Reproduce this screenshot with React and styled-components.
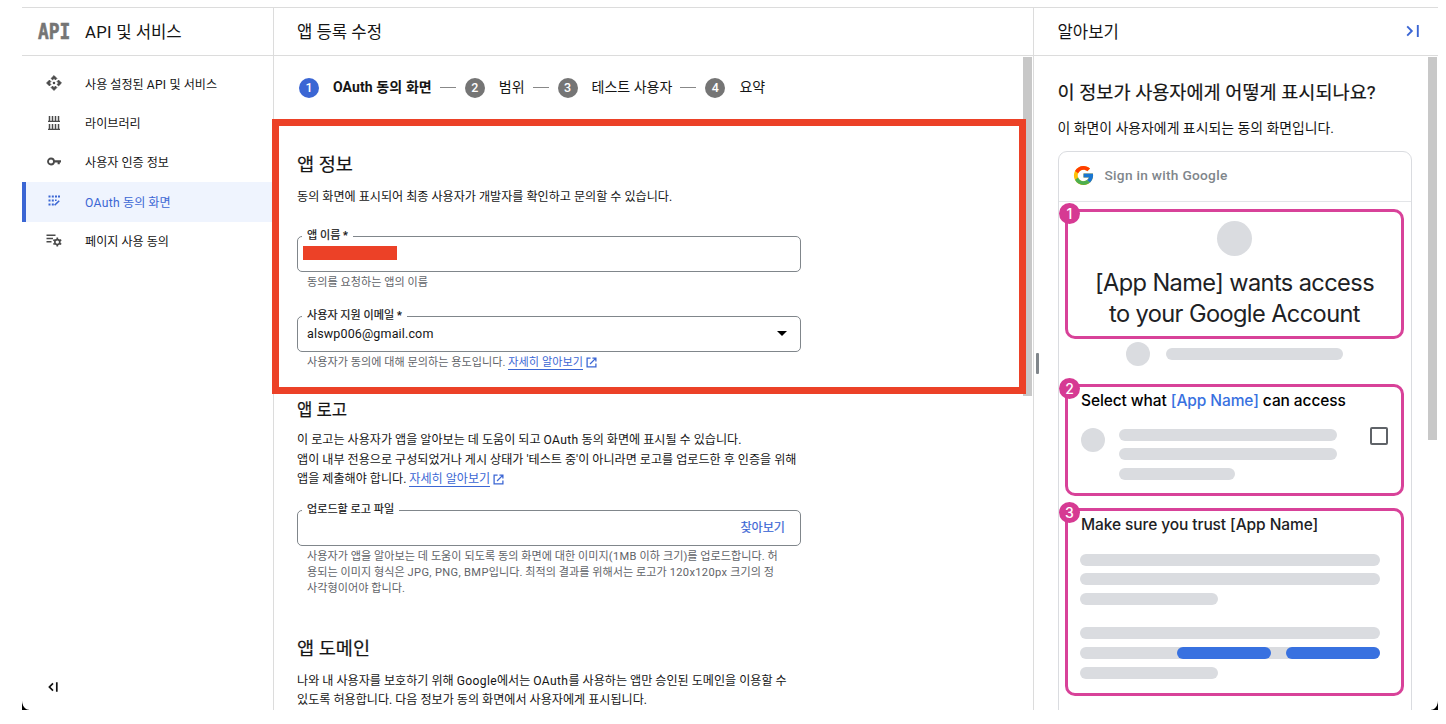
import React from "react";
import styled, { createGlobalStyle } from "styled-components";
import { FcGoogle } from "react-icons/fc";

const menu = [
  {
    label: (
      <>
        사용 설정된 <En>API</En> 및 서비스
      </>
    ),
    icon: <ApiIcon />,
  },
  { label: "라이브러리", icon: <LibraryIcon /> },
  { label: "사용자 인증 정보", icon: <KeyIcon /> },
  {
    label: (
      <>
        <En>OAuth</En> 동의 화면
      </>
    ),
    icon: <ConsentIcon />,
    active: true,
  },
  { label: "페이지 사용 동의", icon: <ListGearIcon /> },
];

const steps = ["OAuth 동의 화면", "범위", "테스트 사용자", "요약"];

function En({ children }) {
  return <Latin lang="en">{children}</Latin>;
}

function ApiIcon() {
  return (
    <svg width="18" height="18" viewBox="0 0 24 24" fill="currentColor">
      <path
        d="M15.9 5.9L13.9 7.9 12 6 10.1 7.9 8.1 5.9 12 2zM18.1 15.9L16.1 13.9 18 12 16.1 10.1 18.1 8.1 22 12zM8.1 18.1L10.1 16.1 12 18 13.9 16.1 15.9 18.1 12 22zM5.9 8.1L7.9 10.1 6 12 7.9 13.9 5.9 15.9 2 12z"
        stroke="currentColor"
        strokeWidth="0.9"
        strokeLinejoin="round"
      />
      <circle cx="12" cy="12" r="1.7" />
    </svg>
  );
}

function LibraryIcon() {
  return (
    <svg width="12" height="14" viewBox="0 0 12 14" fill="none" stroke="currentColor">
      <path d="M0 5.4h12M0 13.3h12" strokeWidth="1.2" />
      <path d="M1.5 0v5M4.5 0v5M7.5 0v5M10.5 0v5M1.5 8v5M4.5 8v5M7.5 8v5M10.5 8v5" strokeWidth="1.5" />
    </svg>
  );
}

function KeyIcon() {
  return (
    <svg width="14" height="9" viewBox="0 0 14 9" fill="none" stroke="currentColor">
      <circle cx="4" cy="4.5" r="3" strokeWidth="1.8" />
      <path d="M6.8 4.3H14M11.7 4.3v3" strokeWidth="2.2" />
    </svg>
  );
}

function ConsentIcon() {
  return (
    <svg width="12" height="12" viewBox="0 0 12 12" fill="currentColor">
      <path d="M.5.5h2v2h-2zM3.8.5h2v2h-2zM7 .5h2v2H7zM10 .5h2v2h-2zM.5 4.5h2v2h-2zM3.8 4.5h2v2h-2zM7 4.5h1.6v1.6H7zM.5 8.6h2v2h-2zM3.8 8.6h2v2h-2z" />
      <path d="M6.6 10.3l4.6-4.6" fill="none" stroke="currentColor" strokeWidth="1.6" />
    </svg>
  );
}

function ListGearIcon() {
  return (
    <svg width="16" height="13" viewBox="0 0 16 13" fill="none" stroke="currentColor">
      <path d="M.5 1.3h9M.5 4.5h6.5M.5 7.7h5" strokeWidth="1.5" />
      <circle cx="11.3" cy="8.1" r="2.5" strokeWidth="1.6" />
      <path
        d="M11.3 3.6v1.6M11.3 11v1.6M7.4 5.8l1.4.9M13.8 9.5l1.4.9M7.4 10.4l1.4-.9M13.8 6.7l1.4-.9"
        strokeWidth="1.7"
      />
    </svg>
  );
}

function External() {
  return (
    <ExternalSvg viewBox="0 0 12 12" fill="none" stroke="currentColor" strokeWidth="1.4">
      <path d="M5 1.2H1.2v9.6h9.6V7M7 1.2h3.8V5M10.8 1.2L4.4 7.6" />
    </ExternalSvg>
  );
}

const App = () => {
  return (
    <>
      <GlobalStyle />
      <Window>
        <Sidebar>
          <Header>
            <ApiLogo>API</ApiLogo>
            <span>
              <En>API</En> 및 서비스
            </span>
          </Header>
          <Menu>
            {menu.map((item, i) => (
              <MenuItem key={i} $active={item.active}>
                <MenuIcon $active={item.active}>{item.icon}</MenuIcon>
                <span>{item.label}</span>
              </MenuItem>
            ))}
          </Menu>
          <Collapse>
            <svg width="12" height="12" viewBox="0 0 12 12" fill="none" stroke="#111" strokeWidth="1.7">
              <path d="M6 2.4L2.4 6 6 9.6M9.8 1.2v9.6" />
            </svg>
          </Collapse>
        </Sidebar>

        <Main>
          <Header $left={23}>앱 등록 수정</Header>
          <Scroller>
            <Stepper>
              {steps.map((step, i) => (
                <Step key={step} $active={i === 0}>
                  <StepNumber $active={i === 0}>{i + 1}</StepNumber>
                  {step}
                </Step>
              ))}
            </Stepper>

            <Highlight>
              <Title>앱 정보</Title>
              <Text>동의 화면에 표시되어 최종 사용자가 개발자를 확인하고 문의할 수 있습니다.</Text>
              <Field>
                <Label>앱 이름 *</Label>
                <Redacted />
              </Field>
              <Hint>동의를 요청하는 앱의 이름</Hint>
              <Field $second>
                <Label>사용자 지원 이메일 *</Label>
                <Value>alswp006@gmail.com</Value>
                <Arrow />
              </Field>
              <Hint>
                사용자가 동의에 대해 문의하는 용도입니다. <Link href="#">자세히 알아보기</Link>
                <External />
              </Hint>
            </Highlight>

            <Section>
              <Title $small>앱 로고</Title>
              <Text>
                이 로고는 사용자가 앱을 알아보는 데 도움이 되고 <En>OAuth</En> 동의 화면에 표시될 수 있습니다.
                <br />
                앱이 내부 전용으로 구성되었거나 게시 상태가 '테스트 중'이 아니라면 로고를 업로드한 후 인증을 위해
                <br />
                앱을 제출해야 합니다. <Link href="#">자세히 알아보기</Link>
                <External />
              </Text>
              <Field $upload>
                <Label>업로드할 로고 파일</Label>
                <Browse>찾아보기</Browse>
              </Field>
              <Hint>
                사용자가 앱을 알아보는 데 도움이 되도록 동의 화면에 대한 이미지<En>(1MB</En> 이하 크기)를 업로드합니다. 허
                <br />
                용되는 이미지 형식은 <En>JPG, PNG, BMP</En>입니다. 최적의 결과를 위해서는 로고가 <En>120x120px</En> 크기의 정
                <br />
                사각형이어야 합니다.
              </Hint>
              <Title $domain>앱 도메인</Title>
              <Text>
                나와 내 사용자를 보호하기 위해 <En>Google</En>에서는 <En>OAuth</En>를 사용하는 앱만 승인된 도메인을 이용할 수
                <br />
                있도록 허용합니다. 다음 정보가 동의 화면에서 사용자에게 표시됩니다.
              </Text>
            </Section>
            <Scrollbar $height={339} />
          </Scroller>
        </Main>

        <Learn>
          <Header $left={23.5}>
            알아보기
            <ExpandIcon width="14" height="14" viewBox="0 0 14 14" fill="none" stroke="#3b66d4" strokeWidth="1.9">
              <path d="M1.2 2.4L5.8 7l-4.6 4.6M11.8 1v12" />
            </ExpandIcon>
          </Header>
          <LearnBody>
            <Handle />
            <Question>이 정보가 사용자에게 어떻게 표시되나요?</Question>
            <Answer>이 화면이 사용자에게 표시되는 동의 화면입니다.</Answer>
            <Card>
              <CardHeader>
                <FcGoogle size={23} />
                <span>Sign in with Google</span>
              </CardHeader>
              <Box $height={130} $top={7}>
                <Badge>1</Badge>
                <BigDot />
                <Wants>
                  [App Name] wants access
                  <br />
                  to your Google Account
                </Wants>
              </Box>
              <Account>
                <Dot />
                <Bar $width={177} />
              </Account>
              <Box $height={112} $top={18}>
                <Badge>2</Badge>
                <BoxTitle $dark>
                  Select what <b>[App Name]</b> can access
                </BoxTitle>
                <Scopes>
                  <Dot />
                  <Bars>
                    <Bar $width={218} />
                    <Bar $width={218} />
                    <Bar $width={116} />
                  </Bars>
                  <Checkbox />
                </Scopes>
              </Box>
              <Box $height={188} $top={12}>
                <Badge>3</Badge>
                <BoxTitle>Make sure you trust [App Name]</BoxTitle>
                <Paragraph $top={19}>
                  <Bar $width={300} />
                  <Bar $width={300} />
                  <Bar $width={138} />
                </Paragraph>
                <Paragraph $top={22.5}>
                  <Bar $width={300} />
                  <Bar $width={300}>
                    <BlueBar />
                    <BlueBar />
                  </Bar>
                  <Bar $width={138} />
                </Paragraph>
              </Box>
            </Card>
            <Scrollbar $height={383} />
          </LearnBody>
        </Learn>
        <Corner />
        <Corner $right />
      </Window>
    </>
  );
};

const GlobalStyle = createGlobalStyle`
  * {
    box-sizing: border-box;
  }

  body {
    margin: 0;
    background: #fff;
    color: #151515;
    font-family: Roboto, "Noto Sans CJK KR", sans-serif;
    font-size: 12.1px;
  }
`;

const Latin = styled.span`
  letter-spacing: 0.35px;
`;

const Window = styled.div`
  position: relative;
  width: 1416px;
  height: 703px;
  margin: 7px 0 0 22px;
  border-top: 1px solid #dcdcdc;
  display: grid;
  grid-template-columns: 252px 760px 404px;
  overflow: hidden;
`;

const Header = styled.header`
  height: 48px;
  flex: none;
  display: flex;
  align-items: center;
  padding: 0 0 2px ${(p) => p.$left || 0}px;
  border-bottom: 1px solid #dcdcdc;
  font-size: 16.7px;
`;

const Sidebar = styled.nav`
  display: flex;
  flex-direction: column;
  border-right: 1px solid #dcdcdc;
`;

const ApiLogo = styled.span`
  width: 39px;
  margin: 2px 8px 0 16px;
  color: #757575;
  font: bold 21.5px/30px "DejaVu Sans Mono", monospace;
  -webkit-text-stroke: 0.6px #757575;
  transform: scaleX(0.83);
  transform-origin: left;
`;

const Menu = styled.ul`
  list-style: none;
  margin: 8px 0 0;
  padding: 0;
`;

const MenuItem = styled.li`
  height: 39.4px;
  padding-bottom: 1px;
  display: flex;
  align-items: center;
  color: ${(p) => (p.$active ? "#3b66d4" : "#151515")};
  background: ${(p) => (p.$active ? "#eff4fe" : "none")};
  box-shadow: ${(p) => (p.$active ? "inset 4px 0 #3b66d4" : "none")};
`;

const MenuIcon = styled.span`
  width: 63px;
  height: 18px;
  display: flex;
  align-items: center;
  justify-content: center;
  color: ${(p) => (p.$active ? "#3b66d4" : "#4a4a4a")};
`;

const Collapse = styled.div`
  margin-top: auto;
  height: 46px;
  padding: 16px 0 0 25px;
`;

const Main = styled.main`
  border-right: 1px solid #dcdcdc;
`;

const Scroller = styled.div`
  position: relative;
`;

const Stepper = styled.ol`
  list-style: none;
  height: 63px;
  margin: 0;
  padding: 0 0 0 25px;
  display: flex;
  align-items: center;
  font-size: 14px;
`;

const Step = styled.li`
  display: flex;
  align-items: center;
  line-height: 19px;
  font-weight: ${(p) => (p.$active ? "bold" : "normal")};
  letter-spacing: ${(p) => (p.$active ? "0.1px" : "normal")};

  &:not(:last-child)::after {
    content: "";
    width: 16px;
    height: 1px;
    margin: 0 9px 0 8px;
    background: #888;
  }
`;

const StepNumber = styled.span`
  width: 20px;
  height: 20px;
  margin-right: 14px;
  border-radius: 50%;
  display: flex;
  align-items: center;
  justify-content: center;
  font-size: 12.5px;
  font-weight: 500;
  color: #fff;
  background: ${(p) => (p.$active ? "#3b66d4" : "#757575")};
`;

const Highlight = styled.section`
  position: relative;
  width: 754px;
  height: 275px;
  margin-left: -2px;
  padding: 26px 0 0 18px;
  border: 7px solid #ec4127;
  z-index: 1;
`;

const Section = styled.section`
  padding-left: 23px;
`;

const Title = styled.h2`
  margin: ${(p) => (p.$domain ? "39px 0 10px" : p.$small ? "4px 0 7px" : "0 0 10px")};
  font-size: ${(p) => (p.$small ? 16.7 : 18.6)}px;
  line-height: 26px;
  font-weight: 400;
  -webkit-text-stroke: 0.2px currentColor;
`;

const Text = styled.p`
  margin: 0;
  line-height: 19.7px;
  white-space: nowrap;
`;

const Field = styled.div`
  position: relative;
  width: 504px;
  height: 36px;
  margin-top: ${(p) => (p.$upload ? 20 : p.$second ? 25 : 28)}px;
  border: 1px solid #80868b;
  border-radius: 5px;
  display: flex;
  align-items: center;
`;

const Label = styled.label`
  position: absolute;
  left: 4px;
  top: -10px;
  padding: 0 5px;
  background: #fff;
  font-size: 11.1px;
  line-height: 18px;
  -webkit-text-stroke: 0.2px currentColor;
`;

const Redacted = styled.span`
  width: 94px;
  height: 14px;
  margin: -2px 0 0 5px;
  background: #ec4127;
`;

const Value = styled.span`
  margin-left: 9px;
  font-size: 12.5px;
  letter-spacing: 0.15px;
`;

const Arrow = styled.span`
  margin: 0 13px 0 auto;
  border: 5px solid transparent;
  border-top-color: #000;
  border-bottom: 0;
`;

const Browse = styled.span`
  margin: 0 15px 0 auto;
  padding-bottom: 3px;
  color: #3b66d4;
  -webkit-text-stroke: 0.2px currentColor;
`;

const Hint = styled.p`
  margin: 3px 0 0 10px;
  font-size: 11.1px;
  line-height: 15.8px;
  letter-spacing: 0.04px;
  color: #5f6368;
  white-space: nowrap;
`;

const Link = styled.a`
  color: #3b66d4;
  text-decoration: none;
  border-bottom: 1px solid #3b66d4;
`;

const ExternalSvg = styled.svg`
  width: 11px;
  height: 11px;
  margin-left: 3px;
  vertical-align: -2px;
  color: #3b66d4;
`;

const Scrollbar = styled.div`
  position: absolute;
  top: 1px;
  right: 1px;
  width: 9px;
  height: ${(p) => p.$height}px;
  background: #c8c8c8;
`;

const Learn = styled.aside`
  min-width: 0;
`;

const ExpandIcon = styled.svg`
  margin: 1px 18px 0 auto;
`;

const LearnBody = styled.div`
  position: relative;
  height: 655px;
  padding: 24px 0 0 23.5px;
  overflow: hidden;
`;

const Handle = styled.div`
  position: absolute;
  left: 2px;
  top: 297px;
  width: 3px;
  height: 21px;
  border-radius: 1px;
  background: #80868b;
`;

const Question = styled.h3`
  margin: 0;
  font-size: 18.6px;
  line-height: 26px;
  font-weight: 400;
  -webkit-text-stroke: 0.2px currentColor;
  white-space: nowrap;
`;

const Answer = styled.p`
  margin: 12px 0 13px;
  font-size: 13.9px;
  line-height: 20px;
`;

const Card = styled.div`
  width: 354px;
  height: 600px;
  border: 1px solid #dadce0;
  border-radius: 9px;
`;

const CardHeader = styled.div`
  height: 50px;
  padding: 0 0 3px 13px;
  display: flex;
  align-items: center;
  gap: 10px;
  border-bottom: 1px solid #e3e5e8;
  color: #80868b;
  font-size: 13.7px;
  font-weight: 500;
  letter-spacing: 0.28px;
`;

const Box = styled.div`
  position: relative;
  width: 339px;
  height: ${(p) => p.$height}px;
  margin: ${(p) => p.$top}px 0 0 6.5px;
  border: 3px solid #d84299;
  border-radius: 10px;
`;

const Badge = styled.span`
  position: absolute;
  left: -9px;
  top: -9px;
  width: 21px;
  height: 21px;
  border-radius: 50%;
  background: #d63a93;
  color: #fff;
  display: flex;
  align-items: center;
  justify-content: center;
  font: 500 14px Inter, sans-serif;
`;

const BigDot = styled.div`
  width: 35px;
  height: 35px;
  margin: 9px auto 0;
  border-radius: 50%;
  background: #dadce0;
`;

const Wants = styled.p`
  margin: 11px -10px 0;
  text-align: center;
  font: 23.6px/31.3px Inter, sans-serif;
  letter-spacing: -0.6px;
  color: #202124;
  white-space: nowrap;
`;

const Account = styled.div`
  margin: 3px 0 0 67.5px;
  display: flex;
  align-items: center;
  gap: 15.5px;
`;

const Dot = styled.span`
  flex: none;
  width: 24px;
  height: 24px;
  border-radius: 50%;
  background: #dadce0;
`;

const Bar = styled.div`
  width: ${(p) => p.$width}px;
  height: 12px;
  border-radius: 6px;
  background: #dadce0;
  display: flex;
  justify-content: flex-end;
  gap: 15px;
`;

const BlueBar = styled.span`
  width: 94px;
  border-radius: 6px;
  background: #3871e0;
`;

const BoxTitle = styled.p`
  margin: 3.5px 0 0 13px;
  font: 500 15.5px/20px Inter, sans-serif;
  letter-spacing: -0.09px;
  color: ${(p) => (p.$dark ? "#000" : "#202124")};
  white-space: nowrap;

  b {
    font-weight: 500;
    color: #3871e0;
  }
`;

const Scopes = styled.div`
  display: flex;
  margin: 17px 0 0 13px;
`;

const Bars = styled.div`
  display: grid;
  gap: 7.7px;
  margin: 1px 33px 0 14px;
`;

const Checkbox = styled.span`
  width: 18px;
  height: 18px;
  margin-top: -1px;
  border: 2px solid #5f6368;
  border-radius: 2px;
`;

const Paragraph = styled.div`
  display: grid;
  gap: 7.7px;
  margin: ${(p) => p.$top}px 0 0 12px;
`;

const Corner = styled.span`
  position: absolute;
  bottom: 0;
  left: ${(p) => (p.$right ? "auto" : 0)};
  right: ${(p) => (p.$right ? 0 : "auto")};
  width: 7px;
  height: 9px;
  background: ${(p) =>
    `radial-gradient(ellipse 7px 9px at ${p.$right ? "0 0" : "100% 0"}, transparent 92%, #000 103%)`};
`;

export default App;
